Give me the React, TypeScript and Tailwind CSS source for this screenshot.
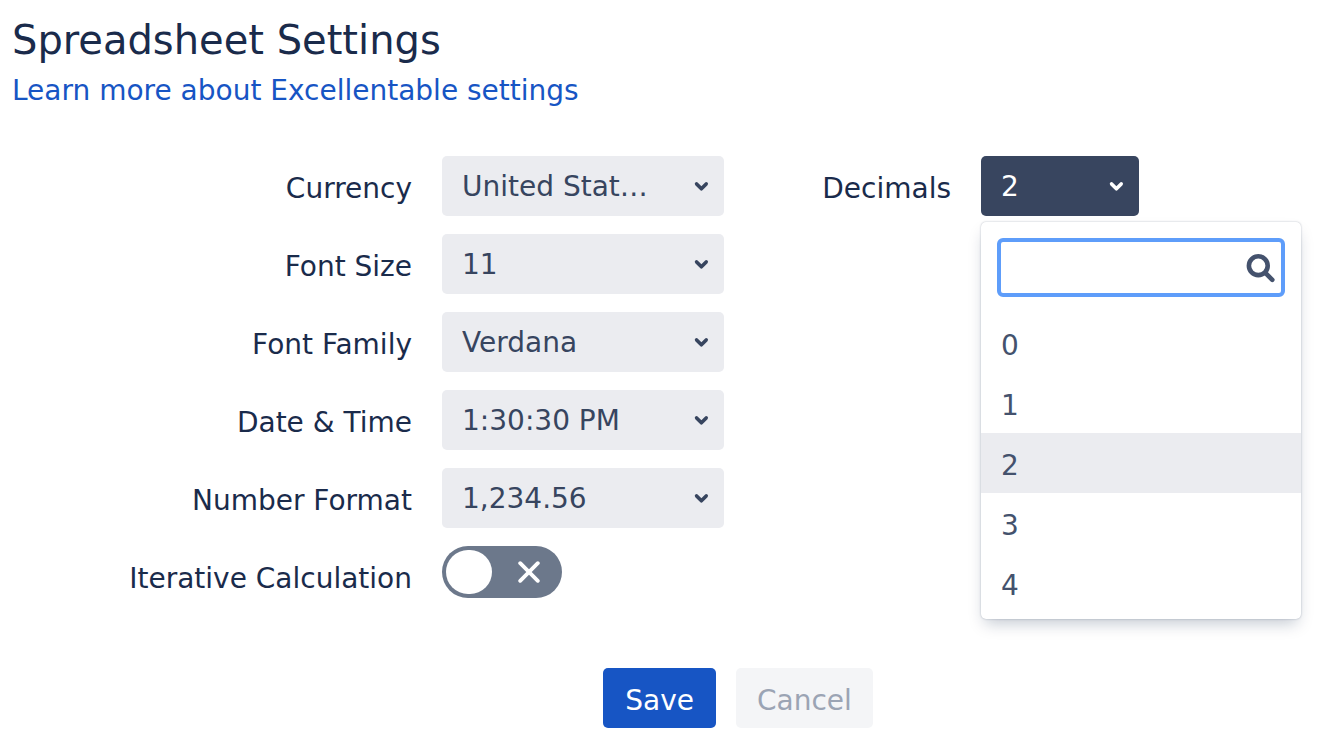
import { useState } from 'react'

const fields = [
    { id: "currency", label: "Currency", options: ["United Stat…", "Canada", "Euro"] },
    { id: "fontSize", label: "Font Size", options: ["11", "12", "14"] },
    { id: "fontFamily", label: "Font Family", options: ["Verdana", "Arial", "Georgia"] },
    { id: "dateTime", label: "Date & Time", options: ["1:30:30 PM", "13:30:30"] },
    { id: "numberFormat", label: "Number Format", options: ["1,234.56", "1234.56"] },
];

const decimalOptions = ["0", "1", "2", "3", "4"];

function Chevron() {
    return (
        <svg
            className="pointer-events-none absolute right-[15px] top-[25px]"
            width="15"
            height="11"
            viewBox="0 0 15 11"
            fill="none"
            stroke="currentColor"
            strokeWidth="3.6"
            strokeLinecap="round"
            strokeLinejoin="round"
            aria-hidden="true"
        >
            <path d="M2.6 2.9 7.4 7.8 12.2 2.9" />
        </svg>
    )
}

function SelectRow({ id, label, options }: { id: string; label: string; options: string[] }) {
    return (
        <div className="grid grid-cols-subgrid col-span-2 items-start">
            <label htmlFor={id} className="pt-[3px] text-right leading-[60px]">{label}</label>
            <div className="relative text-[#37455f]">
                <select
                    id={id}
                    className="block w-full h-[60px] appearance-none rounded-[5px] bg-[#ebecf0] pl-5 pr-10 pt-0.5 outline-none"
                >
                    {options.map((option) => (
                        <option key={option}>{option}</option>
                    ))}
                </select>
                <Chevron />
            </div>
        </div>
    )
}

function DecimalsPicker() {
    const [open, setOpen] = useState(true);
    const [value, setValue] = useState("2");
    const [query, setQuery] = useState("");

    return (
        <div className="relative">
            <button
                type="button"
                id="decimals"
                aria-haspopup="listbox"
                aria-expanded={open}
                aria-labelledby="decimalsLabel decimals"
                onClick={() => setOpen(!open)}
                className={`relative block w-[158px] h-[60px] rounded-[5px] pl-5 pt-0.5 text-left ${open ? "bg-[#38455f] text-white" : "bg-[#ebecf0] text-[#37455f]"}`}
            >
                {value}
                <Chevron />
            </button>
            {open && (
                <div className="absolute left-0 top-full mt-[6px] w-80 rounded-[5px] bg-white pb-[6px] text-[#44526d] shadow-[0_0_2px_rgba(9,30,66,0.31),0_8px_16px_-4px_rgba(9,30,66,0.25)]">
                    <div className="relative p-4">
                        <input
                            type="text"
                            aria-label="Search decimals"
                            value={query}
                            onChange={(e) => setQuery(e.target.value)}
                            className="block w-full h-[59px] rounded-md border-4 border-[#5e9dfa] bg-white pl-3 pr-12 outline-none"
                        />
                        <svg
                            className="pointer-events-none absolute right-[26px] top-8"
                            width="30"
                            height="30"
                            viewBox="0 0 30 30"
                            fill="none"
                            stroke="currentColor"
                            strokeWidth="4.6"
                            strokeLinecap="round"
                            aria-hidden="true"
                        >
                            <circle cx="13.3" cy="11.7" r="9.4" />
                            <path d="M20.6 19.2 27.3 25.8" />
                        </svg>
                    </div>
                    <ul role="listbox" aria-labelledby="decimalsLabel">
                        {decimalOptions.filter((option) => option.includes(query)).map((option) => (
                            <li
                                key={option}
                                role="option"
                                aria-selected={option === value}
                                onClick={() => { setValue(option); setOpen(false); }}
                                className={`cursor-pointer pl-5 pt-[3px] h-[60px] leading-[60px] ${option === value ? "bg-[#ebecf0]" : ""}`}
                            >
                                {option}
                            </li>
                        ))}
                    </ul>
                </div>
            )}
        </div>
    )
}

export default function App() {
    const [iterative, setIterative] = useState(false);

    return (
        <main className="p-3 text-[28px] text-[#1a2b4b] font-[Verdana,'DejaVu_Sans',sans-serif]">
            <h1 className="text-[40px] leading-[56px]">Spreadsheet Settings</h1>
            <a href="#learn" className="block w-fit leading-[46px] text-[#1755c4]">Learn more about Excellentable settings</a>
            <form onSubmit={(e) => e.preventDefault()}>
                <div className="mt-[42px] grid grid-cols-[400fr_282px_197fr_329px] gap-x-[30px]">
                    <div className="grid grid-cols-subgrid col-span-2 content-start gap-y-[15px]">
                        {fields.map((field) => (
                            <SelectRow key={field.id} {...field} />
                        ))}
                        <div className="grid grid-cols-subgrid col-span-2 items-start">
                            <label htmlFor="iterative" className="pt-[3px] text-right leading-[60px]">Iterative Calculation</label>
                            <label className={`flex items-center w-[120px] h-[52px] p-1 rounded-full cursor-pointer ${iterative ? "flex-row-reverse bg-[#1755c4]" : "bg-[#6c788b]"}`}>
                                <input
                                    id="iterative"
                                    type="checkbox"
                                    role="switch"
                                    checked={iterative}
                                    onChange={(e) => setIterative(e.target.checked)}
                                    className="sr-only"
                                />
                                <span className="shrink-0 w-[46px] h-11 rounded-full bg-white"></span>
                                <span className="flex flex-1 justify-center pl-2">
                                    <svg
                                        width="22"
                                        height="22"
                                        viewBox="0 0 22 22"
                                        fill="none"
                                        stroke="white"
                                        strokeWidth="3.8"
                                        strokeLinecap="round"
                                        aria-hidden="true"
                                    >
                                        {iterative ? <path d="M2.5 12 8.5 18 19.5 5" /> : <path d="M2.2 2.2 19.8 19.8M19.8 2.2 2.2 19.8" />}
                                    </svg>
                                </span>
                            </label>
                        </div>
                    </div>
                    <div className="grid grid-cols-subgrid col-span-2 items-start content-start">
                        <label id="decimalsLabel" htmlFor="decimals" className="pt-[3px] text-right leading-[60px]">Decimals</label>
                        <DecimalsPicker />
                    </div>
                </div>
                <div className="mt-[59px] pl-[154px] flex justify-center gap-5">
                    <button type="submit" className="h-[60px] px-[22px] pt-1.5 rounded-[5px] bg-[#1755c4] text-white">Save</button>
                    <button type="button" className="h-[60px] px-[21px] pt-1.5 rounded-[5px] bg-[#f4f5f7] text-[#9ba4b4]">Cancel</button>
                </div>
            </form>
        </main>
    )
}
